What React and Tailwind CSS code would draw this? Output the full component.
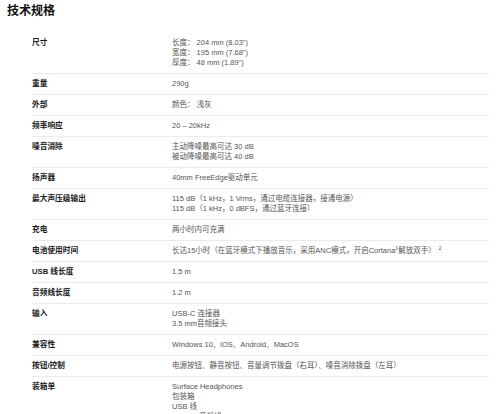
const specs = [
  { label: '尺寸', values: ['长度： 204 mm (8.03")', '宽度： 195 mm (7.68")', '厚度： 48 mm (1.89")'] },
  { label: '重量', values: ['290g'] },
  { label: '外部', values: ['颜色： 浅灰'] },
  { label: '频率响应', values: ['20 – 20kHz'] },
  { label: '噪音消除', values: ['主动降噪最高可达 30 dB', '被动降噪最高可达 40 dB'] },
  { label: '扬声器', values: ['40mm FreeEdge驱动单元'] },
  {
    label: '最大声压级输出',
    values: ['115 dB（1 kHz，1 Vrms，通过电缆连接器，接通电源）', '115 dB（1 kHz，0 dBFS，通过蓝牙连接）'],
  },
  { label: '充电', values: ['两小时内可充满'] },
  { label: '电池使用时间', battery: true },
  { label: 'USB 线长度', values: ['1.5 m'] },
  { label: '音频线长度', values: ['1.2 m'] },
  { label: '输入', values: ['USB-C 连接器', '3.5 mm音频接头'] },
  { label: '兼容性', values: ['Windows 10、iOS、Android、MacOS'] },
  { label: '按钮/控制', values: ['电源按钮、静音按钮、音量调节拨盘（右耳）、噪音消除拨盘（左耳）'] },
  { label: '装箱单', values: ['Surface Headphones', '包装箱', 'USB 线', '3.5 mm 音频线', '快速入门指南'] },
];

function SpecRow({ spec }) {
  return (
    <div className="flex border-b border-[#ebebeb] pt-[5px] pb-[5px]">
      <div className="w-[140px] shrink-0 font-bold text-[7.7px] text-[#1a1a1a] leading-[10px]">{spec.label}</div>
      <div className="flex-1 text-[#555] leading-[10px]">
        {spec.battery ? (
          <div>
            长达15小时（在蓝牙模式下播放音乐，采用ANC模式，开启Cortana
            <span className="relative -top-[3px] text-[5px] leading-none">1</span>
            解放双手）
            <span className="relative -top-[3px] ml-[3px] text-[5px] leading-none">2</span>
          </div>
        ) : (
          spec.values.map((v, i) => <div key={i}>{v}</div>)
        )}
      </div>
    </div>
  );
}

export default function App() {
  return (
    <div className="bg-white w-[500px] min-h-[414px] font-['Liberation_Sans','Noto_Sans_CJK_SC',sans-serif] text-[7.5px]">
      <h2 className="pl-[7px] pt-[4px] text-[12px] leading-[14px] font-bold text-[#111]">技术规格</h2>
      <div className="ml-[32px] w-[457px] mt-[15px]">
        {specs.map((spec) => (
          <SpecRow key={spec.label} spec={spec} />
        ))}
      </div>
    </div>
  );
}
